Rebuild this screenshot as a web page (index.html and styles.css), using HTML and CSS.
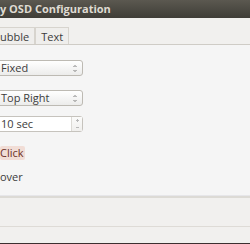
FILE: index.html
```html
<!doctype html>
<html lang="en">
  <head>
    <meta charset="UTF-8" />
    <title>Notify OSD Configuration</title>
    <link rel="stylesheet" href="styles.css">
  </head>
  <body>
    <div class="window">
      <div class="titlebar">y OSD Configuration</div>

      <div class="tabbar">
        <div class="tab">ubble</div>
        <div class="tab">Text</div>
      </div>

      <div class="content">
        <div class="combo">
          <span class="label">Fixed</span>
          <svg class="arrows" width="4" height="9" viewBox="0 0 4 9">
            <path d="M0.5 3 L2 1.5 L3.5 3 M0.5 6 L2 7.5 L3.5 6" fill="none" stroke="#7a7a7a" stroke-width="1" />
          </svg>
        </div>
        <div class="combo combo-second">
          <span class="label">Top Right</span>
          <svg class="arrows" width="4" height="9" viewBox="0 0 4 9">
            <path d="M0.5 3 L2 1.5 L3.5 3 M0.5 6 L2 7.5 L3.5 6" fill="none" stroke="#7a7a7a" stroke-width="1" />
          </svg>
        </div>
        <div class="spin">
          <span class="entry">10 sec</span>
          <span class="spin-buttons">
            <svg width="5" height="14" viewBox="0 0 5 14">
              <path d="M2.5 2 V5 M1 3.5 H4 M1 10.5 H4" fill="none" stroke="#b8b8b8" stroke-width="1" />
            </svg>
          </span>
        </div>
        <div class="option"><span class="highlight">Click</span></div>
        <div class="option option-last">over</div>
      </div>

      <div class="footer">
        <div class="footer-top"></div>
        <div class="footer-bottom"></div>
      </div>
    </div>
  </body>
</html>
```

FILE: styles.css
```css
* {
  margin: 0;
  padding: 0;
  box-sizing: border-box;
}

body {
  font-family: "Open Sans", "DejaVu Sans", sans-serif;
  font-size: 11px;
  color: #3c3c3c;
  background: #3c3b37;
  overflow: hidden;
}

.window {
  width: 250px;
  height: 244px;
  display: flex;
  flex-direction: column;
  border-bottom: 1px solid #3c2f2f;
}

.titlebar {
  height: 18px;
  line-height: 18px;
  background: linear-gradient(#5b5850, #3f3d37);
  color: #dfdbd2;
  font-weight: bold;
  font-size: 11px;
  white-space: nowrap;
}

.tabbar {
  height: 27px;
  background: #f1f0ee;
  border-bottom: 1px solid #cfccc6;
  display: flex;
  align-items: flex-end;
}

.tab {
  height: 17px;
  line-height: 17px;
  padding: 0 5px;
  border: 1px solid #d7d4ce;
  border-bottom: none;
  background: #efeeec;
  color: #3c3c3c;
}

.tab:first-child {
  padding-left: 0;
  border-left: none;
}

.content {
  flex: 1;
  background: #f5f5f5;
  padding-top: 15px;
  border-bottom: 1px solid #e6e6e9;
}

.combo {
  width: 88px;
  height: 16px;
  margin-left: -5px;
  border: 1px solid #bdbab3;
  border-radius: 3px;
  background: linear-gradient(#ffffff, #ececeb);
  display: flex;
  align-items: center;
  justify-content: space-between;
  padding: 0 5px 0 5px;
}

.combo-second {
  margin-top: 14px;
}

.label {
  line-height: 14px;
}

.arrows {
  display: block;
}

.spin {
  width: 88px;
  height: 16px;
  margin: 10px 0 0 -5px;
  border: 1px solid #c6c3bd;
  border-radius: 3px;
  background: #ffffff;
  display: flex;
}

.entry {
  flex: 1;
  padding-left: 5px;
  line-height: 14px;
}

.spin-buttons {
  width: 11px;
  border-left: 1px solid #dcdad5;
  background: linear-gradient(#fbfbfa, #f0efed);
  display: flex;
  justify-content: center;
}

.option {
  margin-top: 14px;
  height: 14px;
  line-height: 14px;
}

.highlight {
  display: inline-block;
  padding: 0 1px 0 0;
  background: #f1ddd6;
  color: #6d3127;
  border-radius: 2px;
}

.option-last {
  margin-top: 10px;
}

.footer {
  height: 47px;
  background: #f1f0ee;
  border-top: 2px solid #dcdad5;
  display: flex;
  flex-direction: column;
}

.footer-top {
  height: 29px;
  border-bottom: 1px solid #dedbd6;
}

.footer-bottom {
  flex: 1;
}
```
